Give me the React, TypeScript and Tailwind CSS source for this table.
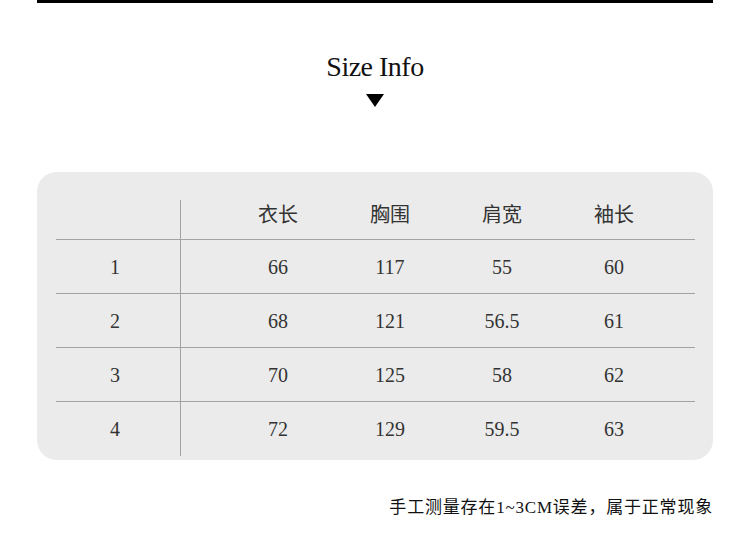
import React from 'react';

// 尺码表
const headers = ['衣长', '胸围', '肩宽', '袖长'];
const rows = [
  { id: '1', values: ['66', '117', '55', '60'] },
  { id: '2', values: ['68', '121', '56.5', '61'] },
  { id: '3', values: ['70', '125', '58', '62'] },
  { id: '4', values: ['72', '129', '59.5', '63'] },
];

const serif = "font-['Liberation_Serif','Noto_Sans_CJK_SC',serif]";

const App: React.FC = () => {
  return (
    <div className={`w-[750px] h-[551px] bg-white text-[#222] ${serif} overflow-hidden`}>
      <div className="mx-[37px] h-[3px] bg-black" />

      {/* 标题 */}
      <div className="flex flex-col items-center pt-[47px]">
        <h1 className="text-[28px] leading-[34px] tracking-[-0.5px] text-[#111]">Size Info</h1>
        <div className="mt-[10px] w-0 h-0 border-l-[9px] border-r-[9px] border-t-[13px] border-l-transparent border-r-transparent border-t-black" />
      </div>

      {/* 表格 */}
      <div className="mt-[65px] mx-[37px] h-[288px] rounded-[20px] bg-[#ebebeb] pt-[28px] px-[19px]">
        <div className="grid grid-cols-[125px_41px_112px_112px_112px_112px_25px] text-[20px] text-[#333]">
          <div className="h-[40px] border-r border-b border-[#a3a3a3]" />
          <div className="h-[40px] border-b border-[#a3a3a3] col-span-6 grid grid-cols-[41px_112px_112px_112px_112px_25px]">
            <div />
            {headers.map(h => (
              <div key={h} className="flex justify-center text-[20px]">{h}</div>
            ))}
            <div />
          </div>
          {rows.map((row, i) => (
            <React.Fragment key={row.id}>
              <div className={`h-[54px] flex items-center justify-center pr-[6px] border-r border-[#a3a3a3] ${i < rows.length - 1 ? 'border-b' : ''}`}>
                {row.id}
              </div>
              <div className={`h-[54px] col-span-6 grid grid-cols-[41px_112px_112px_112px_112px_25px] ${i < rows.length - 1 ? 'border-b border-[#a3a3a3]' : ''}`}>
                <div />
                {row.values.map((v, j) => (
                  <div key={j} className="flex items-center justify-center">{v}</div>
                ))}
                <div />
              </div>
            </React.Fragment>
          ))}
        </div>
      </div>

      {/* 说明 */}
      <div className="mt-[35px] pr-[37px] flex justify-end text-[17px] tracking-[0.8px] text-[#111]">
        手工测量存在1~3CM误差，属于正常现象
      </div>
    </div>
  );
};

export default App;
